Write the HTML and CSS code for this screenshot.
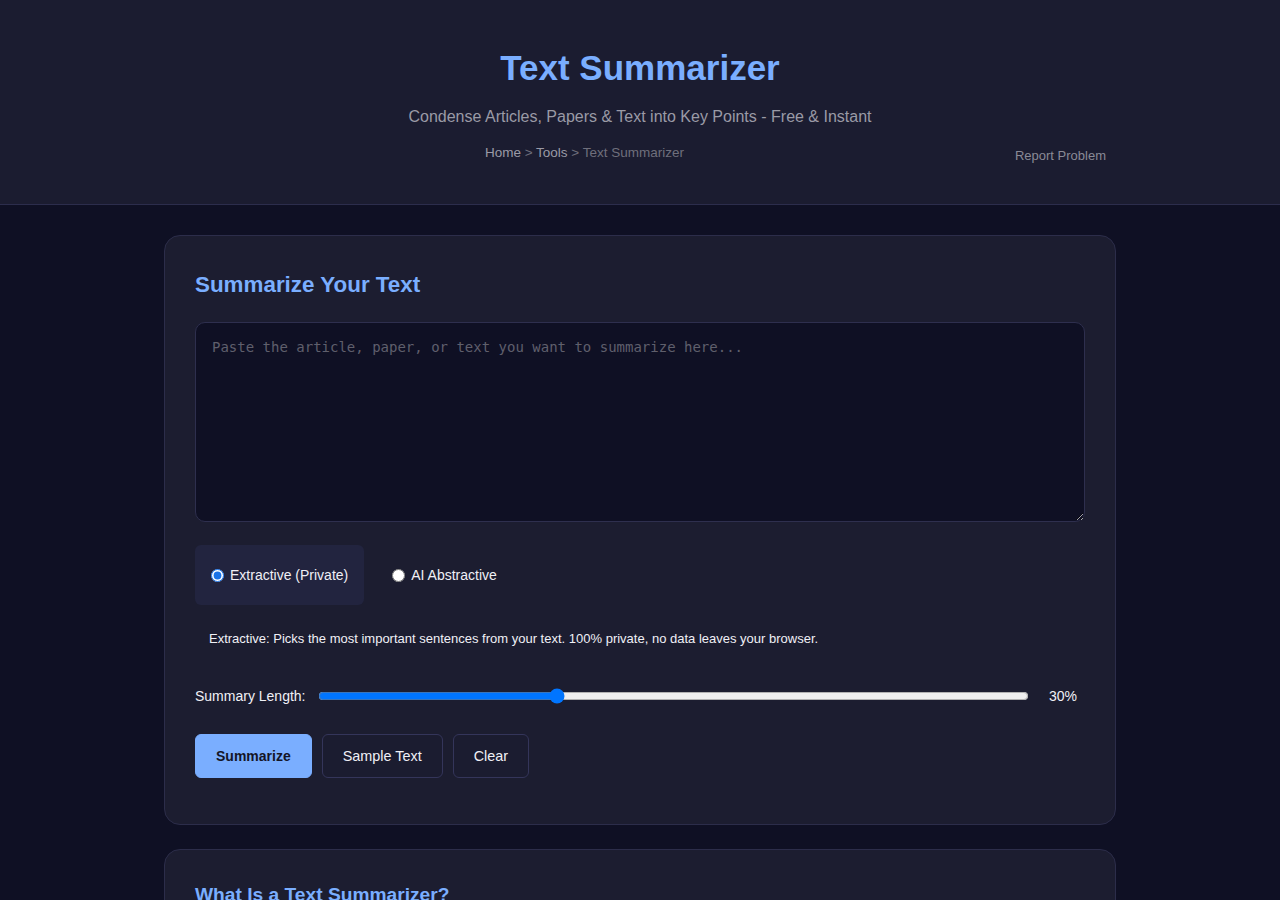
FILE: index.html
```html
<!DOCTYPE html>
<html lang="en">
  <head>
    <meta charset="UTF-8" />
    <meta name="viewport" content="width=device-width, initial-scale=1.0" />
    <title>Text Summarizer</title>
    <link rel="stylesheet" href="styles.css">
  </head>
  <body>
    <header class="site-header">
      <div class="header-inner">
        <h1>Text Summarizer</h1>
        <p class="subtitle">Condense Articles, Papers &amp; Text into Key Points - Free &amp; Instant</p>
        <div class="header-bar">
          <nav class="breadcrumb">
            <a href="#">Home</a> &gt; <a href="#">Tools</a> &gt; <span>Text Summarizer</span>
          </nav>
          <a class="report-link" href="#">Report Problem</a>
        </div>
      </div>
    </header>

    <main class="container">
      <section class="card">
        <h2>Summarize Your Text</h2>
        <textarea class="input-text" placeholder="Paste the article, paper, or text you want to summarize here..."></textarea>

        <div class="mode-row">
          <label class="mode-option active">
            <input type="radio" name="mode" checked />
            Extractive (Private)
          </label>
          <label class="mode-option">
            <input type="radio" name="mode" />
            AI Abstractive
          </label>
        </div>

        <p class="mode-desc">Extractive: Picks the most important sentences from your text. 100% private, no data leaves your browser.</p>

        <div class="length-row">
          <span class="length-label">Summary Length:</span>
          <input type="range" class="length-slider" min="10" max="70" value="30" />
          <span class="length-value">30%</span>
        </div>

        <div class="btn-row">
          <button class="btn btn-primary">Summarize</button>
          <button class="btn">Sample Text</button>
          <button class="btn">Clear</button>
        </div>
      </section>

      <section class="card info-card">
        <h2>What Is a Text Summarizer?</h2>
        <p class="card-text">A text summarizer condenses long articles, papers and documents into their key points.</p>
      </section>
    </main>
  </body>
</html>
```

FILE: styles.css
```css
* {
  padding: 0;
  margin: 0;
  box-sizing: border-box;
}

html,
body {
  font-family: "Liberation Sans", Arial, sans-serif;
  font-size: 16px;
  background-color: #0f1024;
  color: #e6e6ee;
}

a {
  text-decoration: none;
}

.site-header {
  background-color: #1b1c30;
  border-bottom: 1px solid #2c2d4c;
  height: 205px;
}

.header-inner {
  max-width: 952px;
  margin: 0 auto;
  padding-top: 46px;
  text-align: center;
}

.site-header h1 {
  font-size: 35px;
  line-height: 44px;
  color: #7aaeff;
  font-weight: bold;
}

.subtitle {
  margin-top: 17px;
  font-size: 16px;
  line-height: 20px;
  color: #9a9aa6;
}

.header-bar {
  display: flex;
  align-items: flex-start;
  margin-top: 16px;
  padding-right: 10px;
}

.breadcrumb {
  flex: 1;
  font-size: 13.5px;
  line-height: 20px;
  color: #6f6f7c;
}

.breadcrumb a {
  color: #9a9aa6;
}

.report-link {
  margin-left: 10px;
  margin-top: 4px;
  font-size: 13px;
  line-height: 18px;
  color: #8a8a96;
}

.container {
  max-width: 952px;
  margin: 30px auto 0;
}

.card {
  background-color: #1c1d30;
  border: 1px solid #2c2d4a;
  border-radius: 16px;
  padding: 35px 30px 46px;
  margin-bottom: 24px;
}

.card h2 {
  font-size: 22.4px;
  line-height: 28px;
  color: #7aaeff;
  font-weight: bold;
}

.info-card {
  padding-top: 33px;
}

.info-card h2 {
  font-size: 19.2px;
  line-height: 24px;
}

.card-text {
  margin-top: 16px;
  font-size: 15px;
  color: #c8c8d4;
}

.input-text {
  display: block;
  width: 100%;
  height: 200px;
  margin-top: 23px;
  padding: 15px 16px;
  background-color: #0f1024;
  border: 1px solid #2e2f4e;
  border-radius: 10px;
  color: #e6e6ee;
  font-family: "DejaVu Sans Mono", monospace;
  font-size: 14px;
  line-height: 18px;
  resize: vertical;
}

.input-text::placeholder {
  color: #5f5f6c;
}

.mode-row {
  display: flex;
  gap: 12px;
  margin-top: 23px;
}

.mode-option {
  display: flex;
  align-items: center;
  gap: 6px;
  height: 60px;
  padding: 0 16px;
  border-radius: 6px;
  font-size: 14px;
  color: #f0f0f6;
  cursor: pointer;
}

.mode-option.active {
  background-color: #22243f;
}

.mode-option input {
  width: 13px;
  height: 13px;
  margin: 0;
  accent-color: #1a73e8;
}

.mode-desc {
  margin-top: 26px;
  padding: 0 14px;
  font-size: 13px;
  line-height: 16px;
  color: #f0f0f6;
}

.length-row {
  display: flex;
  align-items: center;
  gap: 12px;
  margin-top: 39px;
  height: 20px;
}

.length-label {
  font-size: 14px;
  color: #f0f0f6;
}

.length-slider {
  flex: 1;
  margin: 0 8px 0 0;
}

.length-value {
  width: 36px;
  font-size: 14px;
  color: #f0f0f6;
}

.btn-row {
  display: flex;
  gap: 10px;
  margin-top: 28px;
}

.btn {
  height: 44px;
  padding: 0 20px;
  border: 1px solid #34355a;
  border-radius: 6px;
  background-color: #1b1c30;
  color: #f0f0f6;
  font-family: "Liberation Sans", Arial, sans-serif;
  font-size: 14.4px;
  cursor: pointer;
}

.btn-primary {
  background-color: #7aaeff;
  border-color: #7aaeff;
  color: #141526;
  font-size: 14px;
  font-weight: bold;
}
```
